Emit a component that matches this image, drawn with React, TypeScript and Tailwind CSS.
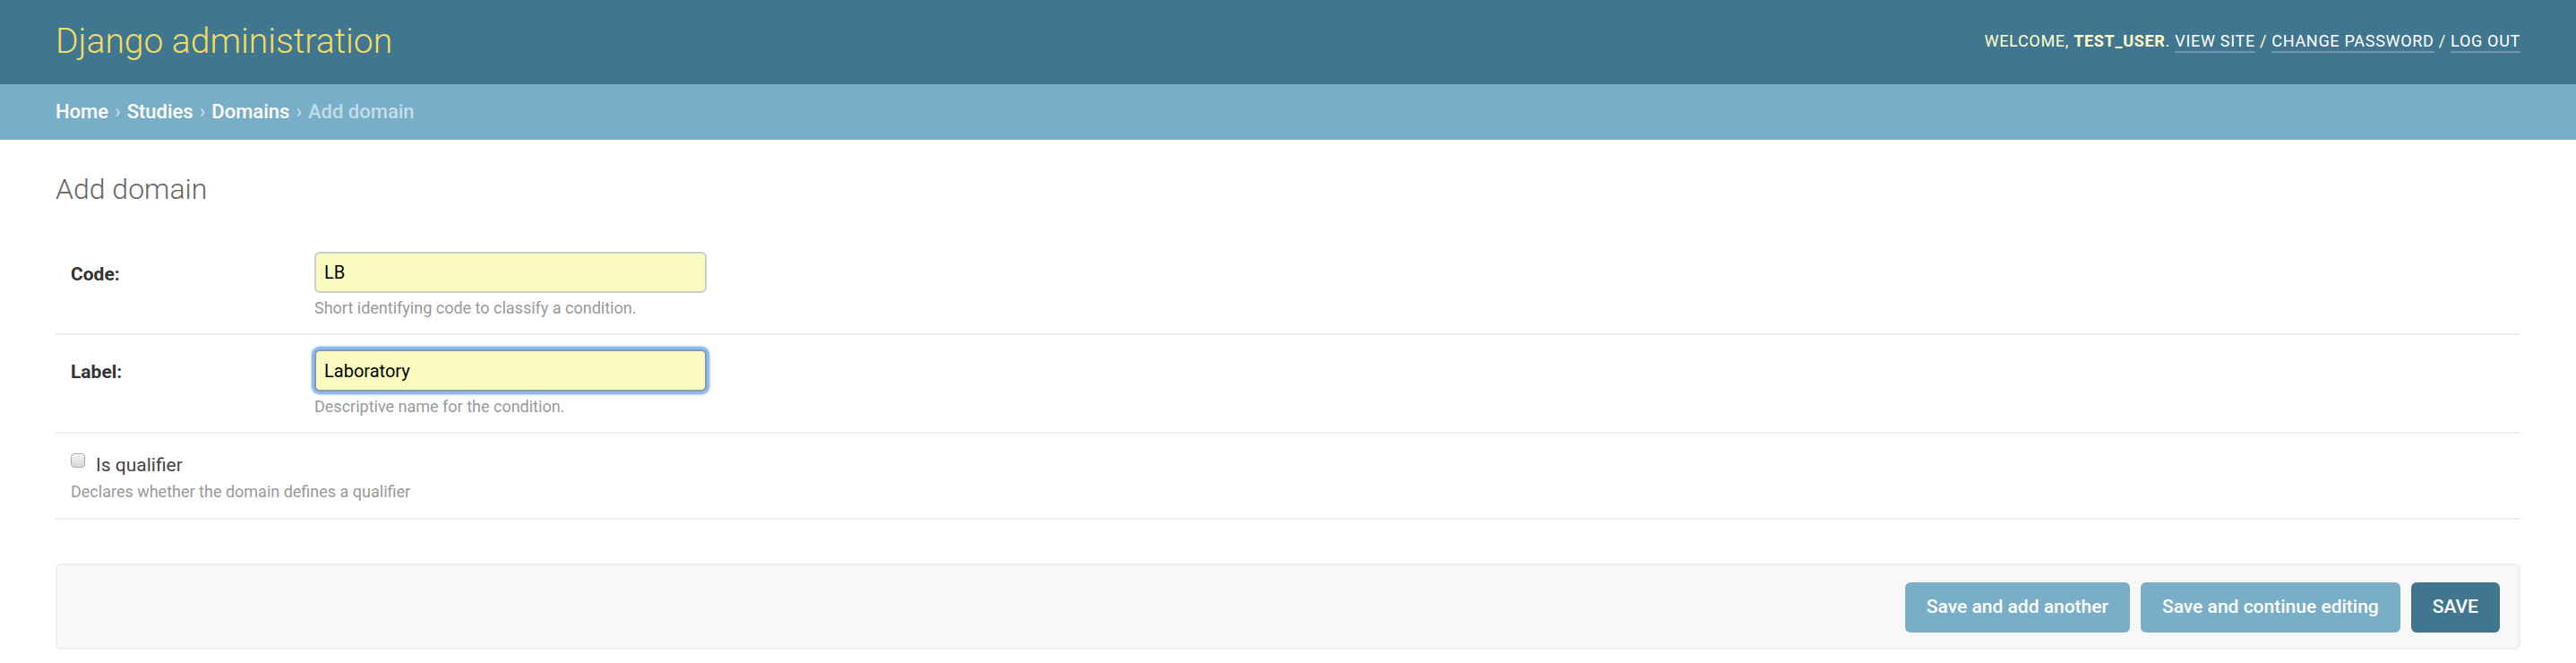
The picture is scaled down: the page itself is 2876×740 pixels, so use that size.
export default function App() {
  const rows = [
    { label: 'Code:', value: 'LB', help: 'Short identifying code to classify a condition.', focused: false },
    { label: 'Label:', value: 'Laboratory', help: 'Descriptive name for the condition.', focused: true },
  ];

  return (
    <div className="min-h-screen bg-white font-['Roboto',sans-serif]">
      {/* header */}
      <header className="flex h-[94px] items-start justify-between bg-[#417690] px-[62px]">
        <h1 className="pt-[22px] text-[39px] font-light leading-[48px] text-[#f5dd5d]">Django administration</h1>
        <div className="pt-[35px] text-[18px] uppercase leading-[21px] tracking-[0.7px] text-[#ffc]">
          Welcome, <strong className="font-bold">test_user</strong>.{' '}
          <a className="border-b-2 border-white/25 pb-[1px] text-white">View site</a> /{' '}
          <a className="border-b-2 border-white/25 pb-[1px] text-white">Change password</a> /{' '}
          <a className="border-b-2 border-white/25 pb-[1px] text-white">Log out</a>
        </div>
      </header>

      {/* breadcrumbs */}
      <div className="flex h-[62px] items-center gap-[7px] bg-[#79aec8] px-[62px] text-[22px] font-medium leading-[26px] text-[#c4dce8]">
        <a className="text-white">Home</a>
        <span>›</span>
        <a className="text-white">Studies</a>
        <span>›</span>
        <a className="text-white">Domains</a>
        <span>›</span>
        <span>Add domain</span>
      </div>

      <main className="px-[62px]">
        <h1 className="pt-[36px] text-[32px] font-light leading-[38px] text-[#666]">Add domain</h1>

        <fieldset className="mt-[35px]">
          {rows.map((row) => (
            <div key={row.label} className="flex items-start border-b-2 border-[#eee] pb-[18px] pl-[17px] pt-[16px]">
              <label className="w-[272px] shrink-0 pt-[13px] text-[21px] font-bold leading-[24px] text-[#333]">
                {row.label}
              </label>
              <div>
                <input
                  readOnly
                  value={row.value}
                  className={
                    row.focused
                      ? 'block h-[47px] w-[438px] rounded-[6px] border-2 border-[#8d98a5] bg-[#fafcbf] px-[9px] text-[20px] text-black shadow-[0_0_0_3px_#8cbaf6,0_0_2px_4px_#bcd7fa] outline-none'
                      : 'block h-[46px] w-[438px] rounded-[6px] border-2 border-[#ccc] bg-[#fafcbf] px-[9px] text-[20px] text-black outline-none'
                  }
                />
                <p className="mt-[6px] text-[18px] leading-[21px] text-[#999]">{row.help}</p>
              </div>
            </div>
          ))}

          <div className="border-b-2 border-[#eee] pb-[19px] pl-[17px] pt-[23px]">
            <div className="flex items-start gap-[12px]">
              <span className="mt-[-1px] block h-4 w-4 rounded-[4px] border border-[#a9a9a9] bg-gradient-to-b from-[#f2f2f2] to-[#d9d9d9] shadow-[inset_0_1px_0_#fff]" />
              <label className="text-[21px] leading-[24px] text-[#444]">Is qualifier</label>
            </div>
            <p className="mt-[7px] text-[18px] leading-[21px] text-[#999]">Declares whether the domain defines a qualifier</p>
          </div>
        </fieldset>

        {/* submit row */}
        <div className="mt-[49px] flex justify-end gap-[12px] rounded-[6px] border-2 border-[#eee] bg-[#f8f8f8] pb-[17px] pr-[21px] pt-[19px]">
          <button className="h-[56px] rounded-[6px] bg-[#79aec8] px-[24px] text-[21px] font-medium text-white">Save and add another</button>
          <button className="h-[56px] rounded-[6px] bg-[#79aec8] px-[24px] text-[21px] font-medium text-white">Save and continue editing</button>
          <button className="h-[56px] rounded-[6px] bg-[#417690] px-[24px] text-[21px] font-medium uppercase text-white">Save</button>
        </div>
      </main>
    </div>
  );
}
